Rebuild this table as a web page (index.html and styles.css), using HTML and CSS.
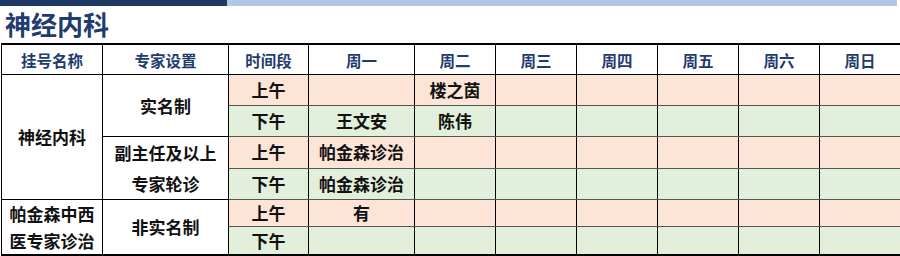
FILE: index.html
```html
<!DOCTYPE html>
<html lang="zh">
<head>
<meta charset="utf-8">
<link rel="stylesheet" href="styles.css">
</head>
<body>
<div class="page">
  <div class="topbar"><div class="bar-dark"></div><div class="bar-light"></div></div>
  <h1 class="title">神经内科</h1>
  <table class="sched">
    <colgroup>
      <col class="c1"><col class="c2"><col class="c3"><col class="c4">
      <col class="cd"><col class="cd"><col class="cd"><col class="cd"><col class="cd"><col class="cd">
    </colgroup>
    <thead>
      <tr class="hrow">
        <th>挂号名称</th><th>专家设置</th><th>时间段</th><th>周一</th><th>周二</th><th>周三</th><th>周四</th><th>周五</th><th>周六</th><th>周日</th>
      </tr>
    </thead>
    <tbody>
      <tr class="r1">
        <td rowspan="4" class="w">神经内科</td>
        <td rowspan="2" class="w">实名制</td>
        <td class="am">上午</td><td class="am"></td><td class="am">楼之茵</td><td class="am"></td><td class="am"></td><td class="am"></td><td class="am"></td><td class="am"></td>
      </tr>
      <tr class="r2">
        <td class="pm">下午</td><td class="pm">王文安</td><td class="pm">陈伟</td><td class="pm"></td><td class="pm"></td><td class="pm"></td><td class="pm"></td><td class="pm"></td>
      </tr>
      <tr class="r3">
        <td rowspan="2" class="w two">副主任及以上<br>专家轮诊</td>
        <td class="am">上午</td><td class="am">帕金森诊治</td><td class="am"></td><td class="am"></td><td class="am"></td><td class="am"></td><td class="am"></td><td class="am"></td>
      </tr>
      <tr class="r4">
        <td class="pm">下午</td><td class="pm">帕金森诊治</td><td class="pm"></td><td class="pm"></td><td class="pm"></td><td class="pm"></td><td class="pm"></td><td class="pm"></td>
      </tr>
      <tr class="r5">
        <td rowspan="2" class="w two2">帕金森中西<br>医专家诊治</td>
        <td rowspan="2" class="w">非实名制</td>
        <td class="am">上午</td><td class="am">有</td><td class="am"></td><td class="am"></td><td class="am"></td><td class="am"></td><td class="am"></td><td class="am"></td>
      </tr>
      <tr class="r6">
        <td class="pm">下午</td><td class="pm"></td><td class="pm"></td><td class="pm"></td><td class="pm"></td><td class="pm"></td><td class="pm"></td><td class="pm"></td>
      </tr>
    </tbody>
  </table>
</div>
</body>
</html>
```

FILE: styles.css
```css
html, body {
  margin: 0;
  padding: 0;
  background: #ffffff;
}
.page {
  width: 900px;
  height: 256px;
  overflow: hidden;
  font-family: "Noto Sans CJK SC", "Noto Sans", sans-serif;
}
.topbar {
  display: flex;
  height: 6px;
  width: 897px;
}
.bar-dark {
  width: 227px;
  background: #203864;
}
.bar-light {
  flex: 1;
  background: #b4c6e7;
}
.title {
  margin: 0;
  padding-left: 5px;
  height: 37px;
  line-height: 36px;
  font-size: 26px;
  font-weight: 700;
  color: #1f3b70;
}
.sched {
  margin-left: 1px;
  border-collapse: collapse;
  table-layout: fixed;
  width: 897px;
  border: 1px solid #000;
  border-bottom: 2px solid #000;
}
.c1 { width: 101px; }
.c2 { width: 126px; }
.c3 { width: 80px; }
.c4 { width: 106px; }
.cd { width: 81px; }
.sched th,
.sched td {
  border: 1px solid #000;
  padding: 0;
  text-align: center;
  vertical-align: middle;
  font-weight: 700;
  white-space: nowrap;
}
.sched th {
  height: 29px;
  font-size: 15.5px;
  line-height: 20px;
  color: #1f3b70;
  background: #fff;
  border-top: 2px solid #000;
}
.sched td {
  font-size: 17px;
  color: #111;
  line-height: 20px;
}
.sched td.am { background: #fce4d6; border-top-color: #555; border-bottom-color: #555; }
.sched td.pm { background: #e2efda; border-top-color: #555; border-bottom-color: #555; }
.sched td.w { background: #fff; }
.sched td.two { line-height: 31px; }
.sched td.two2 { line-height: 27px; }
.r1 td, .r2 td, .r3 td, .r4 td { height: 30px; }
.r5 td { height: 26px; }
.r6 td { height: 26px; }
```
